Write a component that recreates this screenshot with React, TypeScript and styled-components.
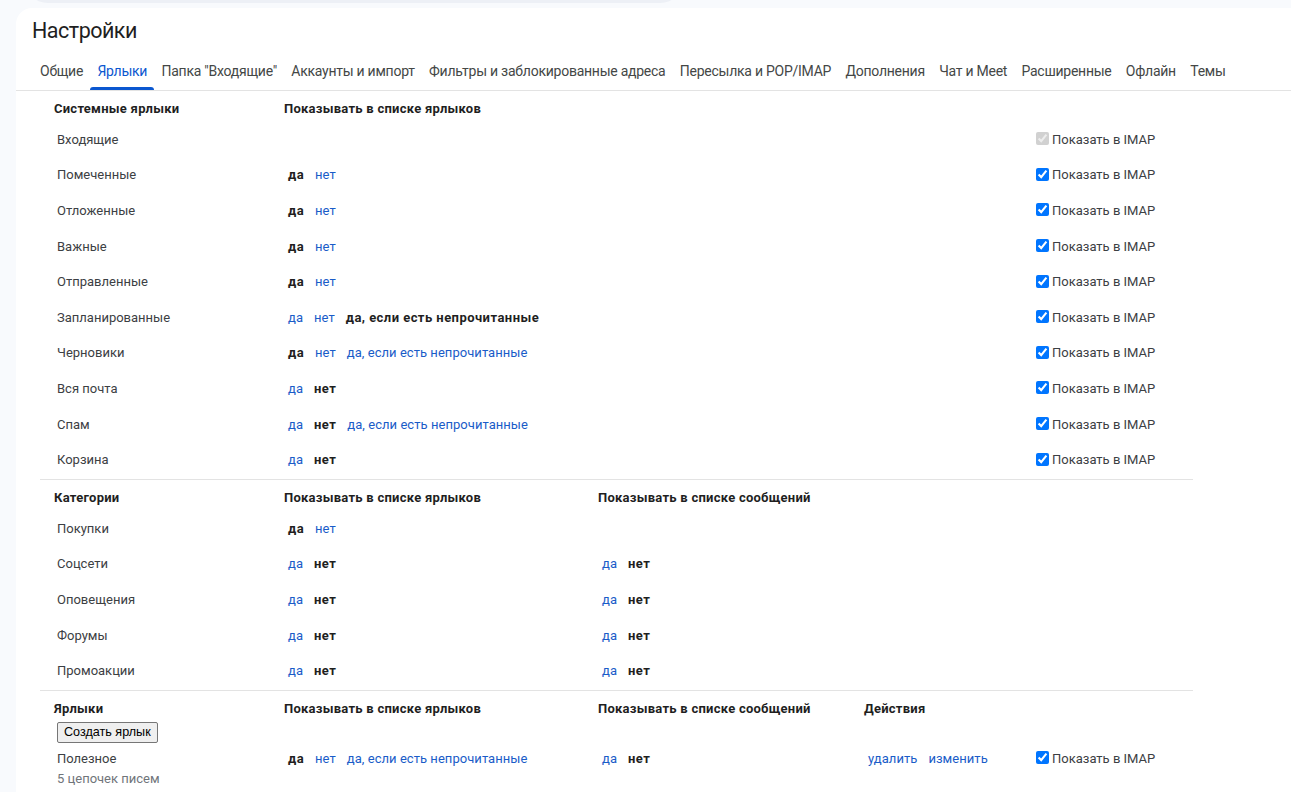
import React from "react";
import styled, { createGlobalStyle } from "styled-components";

const Global = createGlobalStyle`
  html, body { margin: 0; padding: 0; height: 100%; overflow: hidden; background: #f8fafd; }
  body { font-family: Roboto, "Noto Sans", Arial, sans-serif; }
  #root { height: 100%; }
`;

const LINK = "#1a5cc8";

const Page = styled.div`
  height: 100%;
  background: #f8fafd;
  display: flex;
  flex-direction: column;
`;

const TopStrip = styled.div`
  height: 8px;
  overflow: hidden;
  padding-left: 24px;
  flex: none;
`;

const SearchTail = styled.div`
  width: 660px;
  height: 48px;
  margin-top: -45px;
  border-radius: 24px;
  background: #edf0f6;
`;

const Card = styled.main`
  flex: 1;
  margin-left: 16px;
  background: #ffffff;
  border-radius: 16px 0 0 0;
  padding-top: 9px;
`;

const Title = styled.h1`
  margin: 0 0 6px;
  padding-left: 16px;
  font: 400 21.5px/28px Roboto, "Noto Sans", Arial, sans-serif;
  letter-spacing: -0.5px;
  color: #1f1f1f;
`;

const TabBar = styled.nav`
  display: flex;
  height: 39px;
  padding-left: 17px;
  border-bottom: 1px solid #e3e3e3;
`;

const Tab = styled.div<{ $active?: boolean }>`
  position: relative;
  display: flex;
  align-items: center;
  padding: 0 7px;
  margin-right: 0.3px;
  font: 400 14px/20px Roboto, "Noto Sans", Arial, sans-serif;
  letter-spacing: -0.25px;
  color: ${(p) => (p.$active ? "#0b57d0" : "#444746")};
  white-space: nowrap;
  &::after {
    content: "";
    display: ${(p) => (p.$active ? "block" : "none")};
    position: absolute;
    left: 0;
    right: 0;
    bottom: 0;
    height: 3px;
    border-radius: 3px 3px 0 0;
    background: #0b57d0;
  }
`;

const Content = styled.div`
  padding-left: 24px;
`;

const Section = styled.section<{ $line?: boolean }>`
  width: 1153px;
  padding-bottom: 1px;
  border-top: ${(p) => (p.$line ? "1px solid #e3e3e3" : "none")};
`;

const cols = "244px 314px 266px 168px 161px";

const HeadRow = styled.div`
  display: grid;
  grid-template-columns: ${cols};
  padding: 8px 0 3px;
  align-items: start;
`;

const HeadCell = styled.div<{ $first?: boolean }>`
  padding-left: ${(p) => (p.$first ? "14px" : "0")};
  font: 700 13px/20px Roboto, "Noto Sans", Arial, sans-serif;
  letter-spacing: 0.25px;
  color: #1f1f1f;
  display: flex;
  flex-direction: column;
  align-items: flex-start;
`;

const Row = styled.div<{ $tall?: boolean }>`
  display: grid;
  grid-template-columns: ${cols};
  align-items: ${(p) => (p.$tall ? "start" : "center")};
  height: ${(p) => (p.$tall ? "auto" : "35.6px")};
  padding-top: ${(p) => (p.$tall ? "3px" : "0")};
`;

const LabelCell = styled.div`
  padding-left: 17px;
  font: 400 13px/20px Roboto, "Noto Sans", Arial, sans-serif;
  color: #3c4043;
`;

const SubText = styled.div`
  color: #70757a;
`;

const OptCell = styled.div`
  display: flex;
  gap: 11px;
  padding-left: 4px;
  font: 400 13px/20px Roboto, "Noto Sans", Arial, sans-serif;
`;

const Opt = styled.span<{ $on?: boolean }>`
  font-weight: ${(p) => (p.$on ? 700 : 400)};
  letter-spacing: ${(p) => (p.$on ? "0.45px" : "0.05px")};
  color: ${(p) => (p.$on ? "#1f1f1f" : LINK)};
  cursor: ${(p) => (p.$on ? "default" : "pointer")};
  white-space: nowrap;
`;

const ImapCell = styled.label`
  display: flex;
  align-items: center;
  font: 400 13px/20px Roboto, "Noto Sans", Arial, sans-serif;
  color: #3c4043;
  white-space: nowrap;
`;

const Check = styled.input`
  width: 13px;
  height: 13px;
  margin: 0 3px 2px 4px;
`;

const CreateButton = styled.button`
  margin: 3px 0 0 3px;
  padding: 2px 6px 3px;
  font: 400 12.6px "Liberation Sans", Arial, sans-serif;
  letter-spacing: 0;
  color: #000;
  background: #efefef;
  border: 1px solid #767676;
  border-radius: 2px;
`;

type O = [string, boolean];
const YES = "да";
const NO = "нет";
const UNREAD = "да, если есть непрочитанные";

const Options: React.FC<{ items?: O[] }> = ({ items }) => (
  <OptCell>
    {(items || []).map(([t, on], i) => (
      <Opt key={i} $on={on}>
        {t}
      </Opt>
    ))}
  </OptCell>
);

const Imap: React.FC<{ disabled?: boolean }> = ({ disabled }) => (
  <ImapCell>
    <Check type="checkbox" defaultChecked disabled={disabled} />
    Показать в IMAP
  </ImapCell>
);

const tabs = [
  "Общие",
  "Ярлыки",
  'Папка "Входящие"',
  "Аккаунты и импорт",
  "Фильтры и заблокированные адреса",
  "Пересылка и POP/IMAP",
  "Дополнения",
  "Чат и Meet",
  "Расширенные",
  "Офлайн",
  "Темы",
];

const system: { name: string; opts: O[]; disabled?: boolean }[] = [
  { name: "Входящие", opts: [], disabled: true },
  { name: "Помеченные", opts: [[YES, true], [NO, false]] },
  { name: "Отложенные", opts: [[YES, true], [NO, false]] },
  { name: "Важные", opts: [[YES, true], [NO, false]] },
  { name: "Отправленные", opts: [[YES, true], [NO, false]] },
  { name: "Запланированные", opts: [[YES, false], [NO, false], [UNREAD, true]] },
  { name: "Черновики", opts: [[YES, true], [NO, false], [UNREAD, false]] },
  { name: "Вся почта", opts: [[YES, false], [NO, true]] },
  { name: "Спам", opts: [[YES, false], [NO, true], [UNREAD, false]] },
  { name: "Корзина", opts: [[YES, false], [NO, true]] },
];

const categories: { name: string; list: O[]; msgs: O[] }[] = [
  { name: "Покупки", list: [[YES, true], [NO, false]], msgs: [] },
  { name: "Соцсети", list: [[YES, false], [NO, true]], msgs: [[YES, false], [NO, true]] },
  { name: "Оповещения", list: [[YES, false], [NO, true]], msgs: [[YES, false], [NO, true]] },
  { name: "Форумы", list: [[YES, false], [NO, true]], msgs: [[YES, false], [NO, true]] },
  { name: "Промоакции", list: [[YES, false], [NO, true]], msgs: [[YES, false], [NO, true]] },
];

export default function App() {
  return (
    <Page>
      <Global />
      <TopStrip>
        <SearchTail />
      </TopStrip>
      <Card>
        <Title>Настройки</Title>
        <TabBar>
          {tabs.map((t) => (
            <Tab key={t} $active={t === "Ярлыки"}>
              {t}
            </Tab>
          ))}
        </TabBar>
        <Content>
          <Section>
            <HeadRow>
              <HeadCell $first>Системные ярлыки</HeadCell>
              <HeadCell>Показывать в списке ярлыков</HeadCell>
            </HeadRow>
            {system.map((r) => (
              <Row key={r.name}>
                <LabelCell>{r.name}</LabelCell>
                <Options items={r.opts} />
                <div />
                <div />
                <Imap disabled={r.disabled} />
              </Row>
            ))}
          </Section>
          <Section $line>
            <HeadRow>
              <HeadCell $first>Категории</HeadCell>
              <HeadCell>Показывать в списке ярлыков</HeadCell>
              <HeadCell>Показывать в списке сообщений</HeadCell>
            </HeadRow>
            {categories.map((r) => (
              <Row key={r.name}>
                <LabelCell>{r.name}</LabelCell>
                <Options items={r.list} />
                <Options items={r.msgs} />
                <div />
                <div />
              </Row>
            ))}
          </Section>
          <Section $line>
            <HeadRow>
              <HeadCell $first>
                Ярлыки
                <CreateButton>Создать ярлык</CreateButton>
              </HeadCell>
              <HeadCell>Показывать в списке ярлыков</HeadCell>
              <HeadCell>Показывать в списке сообщений</HeadCell>
              <HeadCell>Действия</HeadCell>
            </HeadRow>
            <Row $tall>
              <LabelCell>
                Полезное
                <SubText>5 цепочек писем</SubText>
              </LabelCell>
              <Options items={[[YES, true], [NO, false], [UNREAD, false]]} />
              <Options items={[[YES, false], [NO, true]]} />
              <Options items={[["удалить", false], ["изменить", false]]} />
              <Imap />
            </Row>
          </Section>
        </Content>
      </Card>
    </Page>
  );
}
